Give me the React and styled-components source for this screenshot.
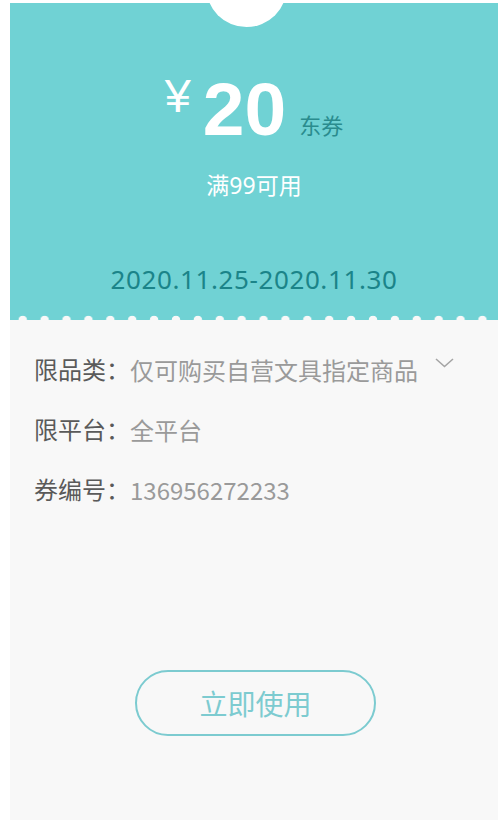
import React from 'react'
import styled, { createGlobalStyle } from 'styled-components'

const GlobalStyle = createGlobalStyle`
  body {
    margin: 0;
    background: #ffffff;
    font-family: "Noto Sans", "Noto Sans CJK SC", sans-serif;
  }
`

const Card = styled.div`
  width: 488px;
  margin: 3px 0 0 10px;
  height: 817px;
  display: flex;
  flex-direction: column;
  background: #f8f8f8;
`

const Top = styled.div`
  position: relative;
  height: 317px;
  box-sizing: border-box;
  padding-top: 69px;
  background: #70d2d4;
  display: flex;
  flex-direction: column;
  align-items: center;

  &::before {
    content: '';
    position: absolute;
    left: 196px;
    top: -57px;
    width: 81px;
    height: 81px;
    border-radius: 50%;
    background: #ffffff;
  }

  &::after {
    content: '';
    position: absolute;
    left: 0;
    right: 0;
    bottom: 0;
    height: 5px;
    background-image: radial-gradient(circle at 50% 100%, #f8f8f8 4px, transparent 4.6px);
    background-size: 21.9px 5px;
    background-position: 1.8px 0;
    background-repeat: repeat-x;
  }
`

const Amount = styled.div`
  display: flex;
  align-items: baseline;
  color: #ffffff;
`

const Yen = styled.span`
  align-self: flex-start;
  font-family: "Liberation Sans", sans-serif;
  font-size: 47px;
  line-height: 47px;
  margin-right: 12px;
`

const Value = styled.span`
  font-family: "Liberation Sans", sans-serif;
  font-weight: 700;
  font-size: 75px;
  line-height: 75px;
`

const Unit = styled.span`
  font-size: 22px;
  color: #2a8c8e;
  margin-left: 13px;
  position: relative;
  top: -1px;
`

const Condition = styled.div`
  margin-top: 27px;
  font-size: 23px;
  line-height: 23px;
  color: #ffffff;
`

const Period = styled.div`
  margin-top: 69px;
  font-size: 26px;
  line-height: 26px;
  letter-spacing: 0.6px;
  color: #1b8489;
`

const Details = styled.div`
  flex: 1;
  padding: 38px 0 0 24px;
  display: flex;
  flex-direction: column;
`

const Row = styled.div`
  display: flex;
  align-items: flex-start;
  font-size: 24px;
  line-height: 24px;
  margin-bottom: 36px;
`

const Label = styled.span`
  color: #5a5a5a;
`

const Text = styled.span`
  color: #9a9a9a;
  font-family: "Noto Sans CJK SC", "Noto Sans", sans-serif;
`

const Chevron = styled.svg`
  margin: 0 0 0 17px;
  flex: none;
`

const UseButton = styled.button`
  align-self: flex-start;
  margin: 132px 0 0 101px;
  width: 241px;
  height: 66px;
  box-sizing: border-box;
  border: 2px solid #7ccbd0;
  border-radius: 33px;
  background: transparent;
  color: #7dcbd0;
  font-family: "Noto Sans", "Noto Sans CJK SC", sans-serif;
  font-size: 28px;
  padding: 0;
`

const rows = [
  { label: '限品类：', text: '仅可购买自营文具指定商品', more: true },
  { label: '限平台：', text: '全平台' },
  { label: '券编号：', text: '136956272233' },
]

export default function App() {
  return (
    <>
      <GlobalStyle />
      <Card>
        <Top>
          <Amount>
            <Yen>¥</Yen>
            <Value>20</Value>
            <Unit>东券</Unit>
          </Amount>
          <Condition>满99可用</Condition>
          <Period>2020.11.25-2020.11.30</Period>
        </Top>
        <Details>
          {rows.map((r) => (
            <Row key={r.label}>
              <Label>{r.label}</Label>
              <Text>{r.text}</Text>
              {r.more && (
                <Chevron width="20" height="10" viewBox="0 0 20 10">
                  <polyline points="1,1 9.5,8.5 18,1" fill="none" stroke="#a5a5a5" strokeWidth="1.6" />
                </Chevron>
              )}
            </Row>
          ))}
          <UseButton>立即使用</UseButton>
        </Details>
      </Card>
    </>
  )
}
